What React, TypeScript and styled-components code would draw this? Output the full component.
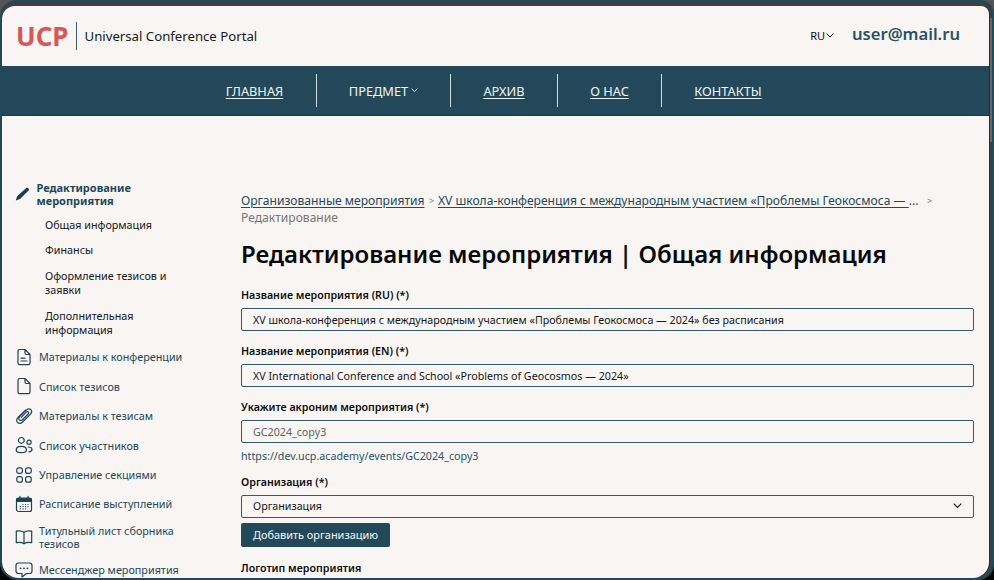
import React from "react";
import styled, { createGlobalStyle } from "styled-components";

const teal = "#224859";
const paper = "#f8f5f3";

const GlobalStyle = createGlobalStyle`
  *, *::before, *::after { box-sizing: border-box; }
  html, body { margin: 0; overflow: hidden; }
  body { font-family: "Noto Sans", "Open Sans", sans-serif; color: #0b0d0e; background: #4b4d4e; }
  h1, p { margin: 0; }
`;

const Desktop = styled.div`
  width: 994px;
  height: 580px;
  overflow: hidden;
  background: linear-gradient(#555 0 50%, #050505 50%);
`;

const Frame = styled.div`
  width: 994px;
  height: 580px;
  border: 2px solid ${teal};
  border-radius: 16px 14px 16px 18px;
  background: linear-gradient(#3d4042 0 16px, #666 16px 140px, #3d4143 140px);
  padding: 4px 3px 0 0;
  overflow: hidden;
`;

const Page = styled.div`
  height: 572px;
  border-radius: 13px 8px 16px 16px;
  background: ${paper};
  overflow: hidden;
  box-shadow: 1px 0 0 #292d2f;
`;

const Header = styled.header`
  height: 60px;
  display: flex;
  align-items: center;
  padding: 0 29px 1px 14px;
`;

const Logo = styled.span`
  width: 60px;
  font-size: 26px;
  line-height: 28px;
  font-weight: 700;
  color: #d95558;
`;

const PortalName = styled.span`
  height: 28px;
  padding-left: 7.5px;
  border-left: 1px solid #3c6073;
  font-size: 13.2px;
  line-height: 28px;
  color: #17191a;
`;

const Language = styled.span`
  display: flex;
  align-items: center;
  gap: 1px;
  margin-left: auto;
  font-size: 11px;
  line-height: 16px;
`;

const User = styled.span`
  margin: -3px 0 0 18px;
  font-size: 16.6px;
  line-height: 24px;
  font-weight: 600;
  color: #285264;
`;

const Nav = styled.nav`
  height: 50px;
  display: flex;
  justify-content: center;
  align-items: center;
  padding-right: 4px;
  background: ${teal};
  border-bottom: 1px solid #14394a;
  color: #f2f5f6;
`;

const NavItem = styled.span<{ $width: number; $link?: boolean }>`
  width: ${(p) => p.$width}px;
  height: 33px;
  display: flex;
  align-items: center;
  justify-content: center;
  gap: 3px;
  font-size: 12.8px;
  line-height: 20px;
  text-decoration: ${(p) => (p.$link ? "underline" : "none")};
  text-underline-offset: 2px;
  & + & { border-left: 1px solid #d4dfe3; }
`;

const Columns = styled.div`
  display: flex;
`;

const Sidebar = styled.aside`
  width: 239px;
  flex: none;
  padding: 65px 0 0 13px;
  color: ${teal};
`;

const SideHead = styled.div`
  display: flex;
  align-items: center;
  gap: 6.5px;
  font-size: 11px;
  line-height: 13px;
  font-weight: 700;
  svg { flex: none; }
`;

const SubItem = styled.div`
  width: 150px;
  margin-left: 30px;
  padding-top: 10.8px;
  font-size: 10.75px;
  line-height: 14.6px;
  color: #151719;
`;

const SideList = styled.div`
  padding-top: 4.5px;
`;

const SideItem = styled.div<{ $tall?: boolean }>`
  height: ${(p) => (p.$tall ? 36.5 : 29.4)}px;
  display: flex;
  align-items: center;
  gap: 6px;
  font-size: 10.8px;
  line-height: 13px;
  svg { flex: none; }
`;

const Content = styled.main`
  width: 733px;
  flex: none;
  padding-top: 75.5px;
`;

const Crumbs = styled.div`
  height: 34px;
  font-size: 12.08px;
  line-height: 17px;
  color: #777;
`;

const CrumbRow = styled.div`
  display: flex;
  white-space: nowrap;
`;

const CrumbLink = styled.span<{ $width: number }>`
  width: ${(p) => p.$width}px;
  color: #24495a;
  span { text-decoration: underline; text-underline-offset: 2px; white-space: pre; }
`;

const CrumbArrow = styled.span<{ $width: number }>`
  width: ${(p) => p.$width}px;
  font-size: 9px;
  text-align: center;
`;

const Title = styled.h1`
  margin-top: 11.5px;
  font-size: 24px;
  line-height: 34px;
  font-weight: 600;
  white-space: nowrap;
  color: #060708;
`;

const Label = styled.div<{ $top: number }>`
  margin-top: ${(p) => p.$top}px;
  height: 16px;
  font-size: 10.67px;
  line-height: 16px;
  font-weight: 600;
`;

const Field = styled.div<{ $muted?: boolean }>`
  height: 23px;
  margin-top: 5px;
  padding: 0 11px;
  display: flex;
  align-items: center;
  justify-content: space-between;
  border: 1px solid #365a6c;
  border-radius: 2px;
  font-size: 10.7px;
  line-height: 16px;
  color: ${(p) => (p.$muted ? "#606364" : "#151719")};
`;

const EventLink = styled.div`
  height: 16px;
  margin-top: 5px;
  font-size: 10.7px;
  line-height: 16px;
  color: #285467;
`;

const AddButton = styled.button`
  display: block;
  width: 149px;
  height: 24px;
  margin-top: 5.5px;
  padding: 0;
  border: 0;
  border-radius: 2px;
  background: ${teal};
  color: #f6f8f8;
  font: 10.95px/24px "Noto Sans", sans-serif;
`;

const Chevron = ({ size = 8 }: { size?: number }) => (
  <svg width={size} height={size / 2 + 1} viewBox="0 0 8 5" fill="none" stroke="currentColor" strokeWidth="1">
    <path d="M.6.6 4 4 7.4.6" />
  </svg>
);

const Icon = ({ children }: { children: React.ReactNode }) => (
  <svg width="18" height="18" viewBox="0 0 18 18" fill="none" stroke="#1d4254" strokeWidth="1.2" strokeLinecap="round" strokeLinejoin="round">
    {children}
  </svg>
);

const page = "M3 3.2C3 2.2 3.6 1.5 4.6 1.5H10L15 6.5V15C15 16 14.4 16.6 13.4 16.6H4.6C3.6 16.6 3 16 3 15ZM10 1.5V5C10 6 10.5 6.5 11.5 6.5H15";

const items: { text: React.ReactNode; tall?: boolean; icon: React.ReactNode }[] = [
  { text: "Материалы к конференции", icon: <><path d={page} /><path d="M6 10.2H10M6 13H12" /></> },
  { text: "Список тезисов", icon: <path d={page} /> },
  {
    text: "Материалы к тезисам",
    icon: <path d="M10.4 3.2 3 10.4C1.4 12 1.2 14.2 2.6 15.5S6 16.6 7.6 15L15.3 7.4C16.7 6 17 4 15.8 2.7S12.6 1.7 11.2 3.1L4.6 9.7C3.6 10.7 3.6 12 4.4 12.9S6.7 13.5 7.7 12.5L13.2 7C13.9 6.3 13.9 5.5 13.4 5S12 4.5 11.3 5.2L6.2 10.4" />,
  },
  {
    text: "Список участников",
    icon: <><circle cx="6.3" cy="4.4" r="2.9" /><circle cx="14" cy="6.3" r="2.1" /><path d="M1.2 14C1.2 11.7 3.3 10.4 6.3 10.4S11.4 11.7 11.4 14 9.3 16.6 6.3 16.6 1.2 16.3 1.2 14ZM13.3 11C15.7 11 17 12.1 17 13.6S15.8 15.8 13.9 15.8" /></>,
  },
  {
    text: "Управление секциями",
    icon: <><rect x="1.8" y="1.8" width="5.6" height="5.6" rx="2" /><rect x="10.6" y="1.8" width="5.6" height="5.6" rx="2" /><rect x="1.8" y="10.6" width="5.6" height="5.6" rx="2" /><rect x="10.6" y="10.6" width="5.6" height="5.6" rx="2" /></>,
  },
  {
    text: "Расписание выступлений",
    icon: <><rect x="1.5" y="3" width="15" height="13.5" rx="2" /><path d="M2 3.5H16V6.5H2Z" fill="#1d4254" /><path d="M5 1.3V4M13 1.3V4" /><path d="M8 9.5H8.1M10.5 9.5H10.6M13 9.5H13.1M5.3 11.7H5.4M8 11.7H8.1M10.5 11.7H10.6M13 11.7H13.1M5.3 13.9H5.4M8 13.9H8.1M10.5 13.9H10.6" /></>,
  },
  {
    text: <>Титульный лист сборника<br />тезисов</>,
    tall: true,
    icon: <path d="M9 4.5C7.5 3.2 4.5 2.7 1.3 3.2V14.7C4.5 14.2 7.5 14.7 9 15.8 10.5 14.7 13.5 14.2 16.7 14.7V3.2C13.5 2.7 10.5 3.2 9 4.5ZM9 4.5V15.5" />,
  },
  {
    text: "Мессенджер мероприятия",
    icon: <><path d="M3.5 2H14.5C16 2 17 3 17 4.5V10C17 11.5 16 12.5 14.5 12.5H11.5L7 16V12.5H3.5C2 12.5 1 11.5 1 10V4.5C1 3 2 2 3.5 2Z" /><path d="M5.5 7.3H5.7M8.9 7.3H9.1M12.3 7.3H12.5" strokeWidth="1.7" /></>,
  },
];

export default function App() {
  return (
    <Desktop>
      <GlobalStyle />
      <Frame>
        <Page>
          <Header>
            <Logo>UCP</Logo>
            <PortalName>Universal Conference Portal</PortalName>
            <Language>RU <Chevron /></Language>
            <User>user@mail.ru</User>
          </Header>
          <Nav>
            <NavItem $width={123} $link>ГЛАВНАЯ</NavItem>
            <NavItem $width={134}>ПРЕДМЕТ <Chevron size={7} /></NavItem>
            <NavItem $width={107} $link>АРХИВ</NavItem>
            <NavItem $width={104} $link>О НАС</NavItem>
            <NavItem $width={133} $link>КОНТАКТЫ</NavItem>
          </Nav>
          <Columns>
            <Sidebar>
              <SideHead>
                <svg width="15" height="16" viewBox="0 0 15 16" fill="#173e50">
                  <path d="M.8 14.6 1.7 11.5C2 10.5 2.6 9.9 3.2 9.3L11 2.2C12.6.8 15 3 13.5 4.6L5.8 12.2C5.1 12.9 4.5 13.3 3.7 13.6Z" />
                </svg>
                <span>Редактирование<br />мероприятия</span>
              </SideHead>
              <SubItem>Общая информация</SubItem>
              <SubItem>Финансы</SubItem>
              <SubItem>Оформление тезисов и<br />заявки</SubItem>
              <SubItem>Дополнительная<br />информация</SubItem>
              <SideList>
                {items.map((it, i) => (
                  <SideItem key={i} $tall={it.tall}>
                    <Icon>{it.icon}</Icon>
                    <span>{it.text}</span>
                  </SideItem>
                ))}
              </SideList>
            </Sidebar>
            <Content>
              <Crumbs>
                <CrumbRow>
                  <CrumbLink $width={184}><span>Организованные мероприятия</span></CrumbLink>
                  <CrumbArrow $width={13}>&gt;</CrumbArrow>
                  <CrumbLink $width={479}><span>XV школа-конференция с международным участием «Проблемы Геокосмоса — </span>...</CrumbLink>
                  <CrumbArrow $width={25}>&gt;</CrumbArrow>
                </CrumbRow>
                Редактирование
              </Crumbs>
              <Title>Редактирование мероприятия | Общая информация</Title>
              <Label $top={16}>Название мероприятия (RU) (*)</Label>
              <Field>XV школа-конференция с международным участием «Проблемы Геокосмоса — 2024» без расписания</Field>
              <Label $top={12}>Название мероприятия (EN) (*)</Label>
              <Field>XV International Conference and School «Problems of Geocosmos — 2024»</Field>
              <Label $top={12}>Укажите акроним мероприятия (*)</Label>
              <Field $muted>GC2024_copy3</Field>
              <EventLink>https://dev.ucp.academy/events/GC2024_copy3</EventLink>
              <Label $top={9.5}>Организация (*)</Label>
              <Field>Организация <Chevron size={9} /></Field>
              <AddButton>Добавить организацию</AddButton>
              <Label $top={13}>Логотип мероприятия</Label>
            </Content>
          </Columns>
        </Page>
      </Frame>
    </Desktop>
  );
}
